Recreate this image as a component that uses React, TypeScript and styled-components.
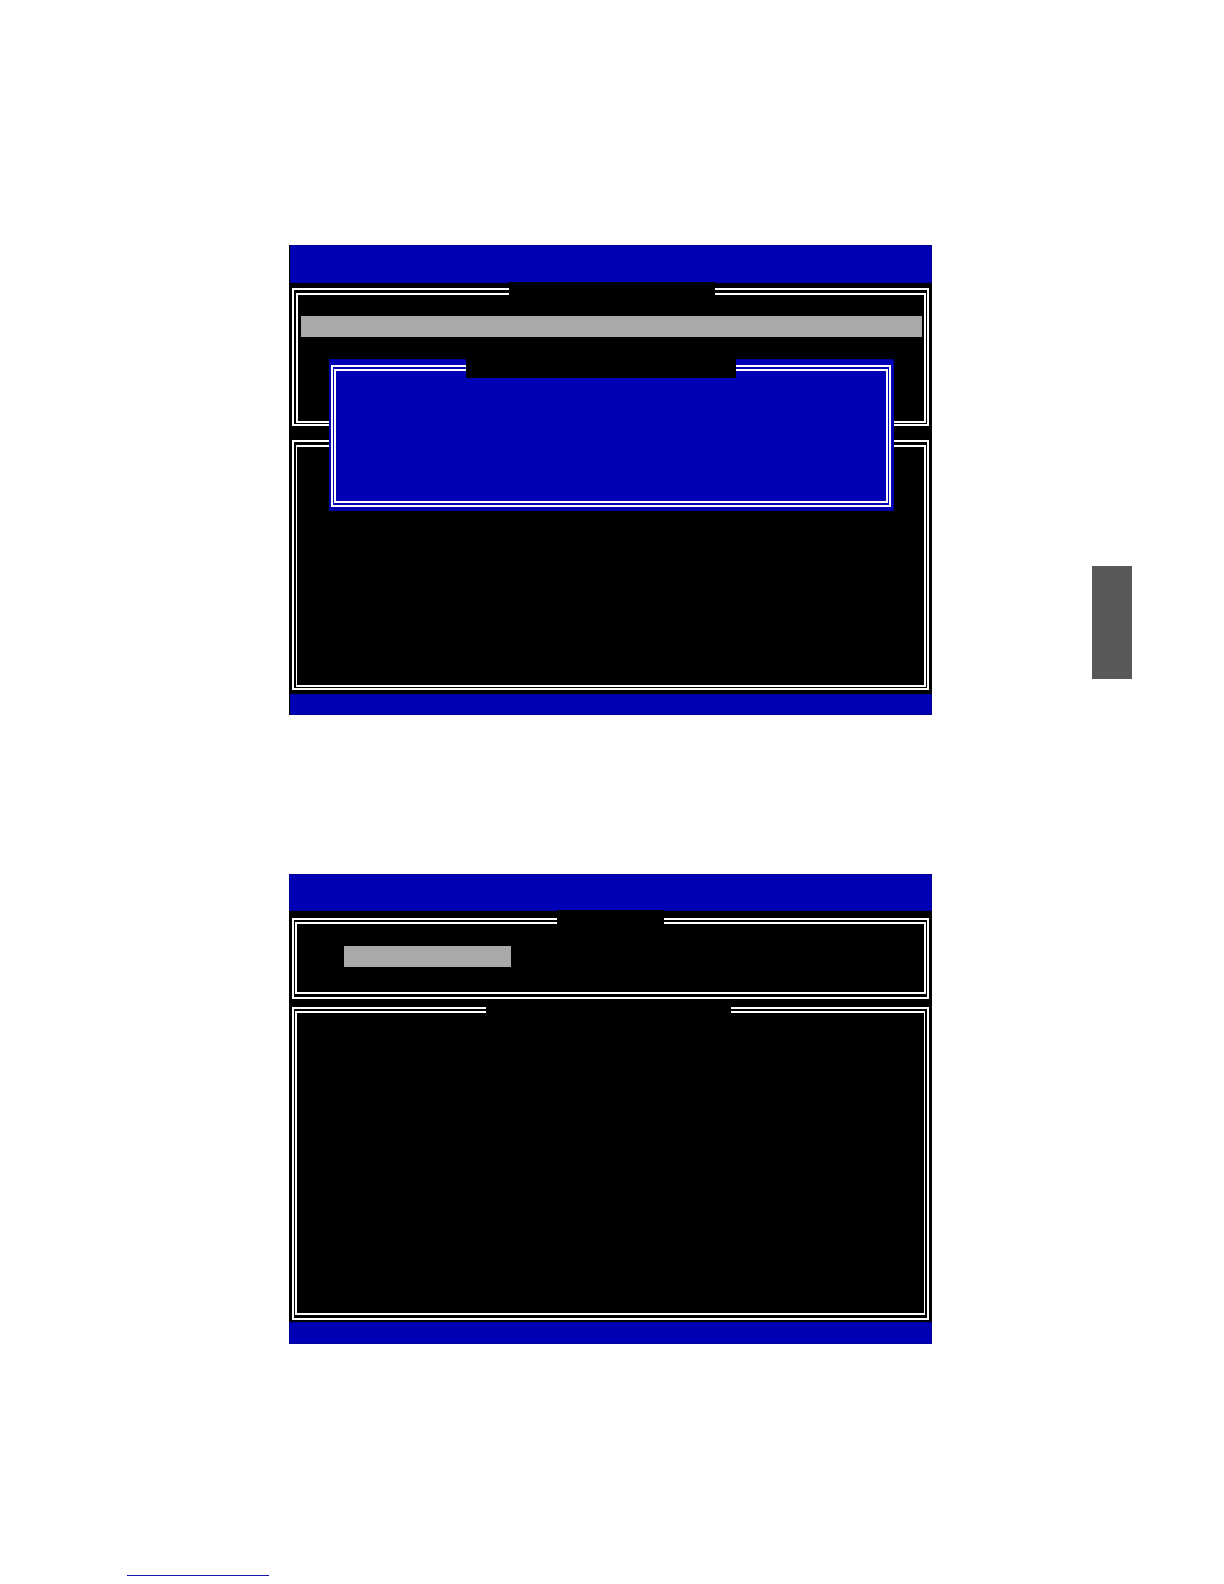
import React from 'react';
import styled, { createGlobalStyle } from 'styled-components';

const blue = '#0000b4';
const blueEdge = '#000098';

const GlobalStyle = createGlobalStyle`
  *, *::before, *::after { box-sizing: border-box; }
  body {
    margin: 0;
    background: #fff;
    font-family: "Liberation Sans", Arial, sans-serif;
  }
`;

const Page = styled.div`
  padding: 245px 0 8px;
`;

const Content = styled.div`
  display: grid;
  grid-template-columns: 1fr minmax(0, 643px) 1fr;
  align-items: start;
  padding-right: 3px;
`;

const Screens = styled.main`
  grid-column: 2;
  display: flex;
  flex-direction: column;
  gap: 159px;
`;

const ChapterTab = styled.aside`
  justify-self: end;
  width: 40px;
  height: 113px;
  margin: 321px 89px 0 0;
  background: #58595b;
`;

const Screen = styled.section`
  position: relative;
  display: flex;
  flex-direction: column;
  background: #000;
`;

const Bar = styled.div<{ $height: number; $inset?: number }>`
  height: ${(p) => p.$height}px;
  margin-left: ${(p) => p.$inset ?? 0}px;
  background: ${blue};
  box-shadow: inset 0 0 0 1px ${blueEdge};
`;

const Panels = styled.div<{ $gap: number; $padding: string }>`
  display: flex;
  flex-direction: column;
  gap: ${(p) => p.$gap}px;
  padding: ${(p) => p.$padding};
`;

const Frame = styled.div<{ $height: number; $padding: string }>`
  position: relative;
  display: flex;
  min-height: ${(p) => p.$height}px;
  padding: ${(p) => p.$padding};
  border: 2px solid #fff;
`;

const InnerFrame = styled.div<{ $left?: number; $right?: number }>`
  flex: 1;
  border: 2px solid #fff;
  border-left-width: ${(p) => p.$left ?? 2}px;
  border-right-width: ${(p) => p.$right ?? 2}px;
`;

const TitlePlate = styled.div<{ $left: number; $width: number; $top: number }>`
  position: absolute;
  top: ${(p) => p.$top}px;
  left: ${(p) => p.$left}px;
  width: ${(p) => p.$width}px;
  height: 19px;
  background: #000;
`;

const Highlight = styled.div<{ $margin: string; $width?: number }>`
  height: 21px;
  width: ${(p) => (p.$width ? `${p.$width}px` : 'auto')};
  margin: ${(p) => p.$margin};
  background: #a8a9ab;
`;

const Dialog = styled.div`
  position: absolute;
  top: 114px;
  left: 40px;
  right: 38px;
  padding: 6px 3px 4px 2px;
  background: ${blue};
  box-shadow: inset 0 0 0 1px ${blueEdge};
`;

const Rule = styled.hr`
  width: 142px;
  height: 1px;
  margin: 231px 0 0 127px;
  border: 0;
  background: #1414a8;
`;

export default function App() {
  return (
    <Page>
      <GlobalStyle />
      <Content>
        <Screens>
          <Screen>
            <Bar $height={38} $inset={1} />
            <Panels $gap={14} $padding="5px 3px 4px">
              <Frame $height={138} $padding="3px 1px 1px 2px">
                <InnerFrame>
                  <Highlight $margin="21px 2px 0 3px" />
                </InnerFrame>
                <TitlePlate $left={215} $width={206} $top={-8} />
              </Frame>
              <Frame $height={250} $padding="3px 1px 1px 2px">
                <InnerFrame $left={1} />
              </Frame>
            </Panels>
            <Bar $height={21} $inset={1} />
            <Dialog>
              <Frame $height={142} $padding="2px 1px">
                <InnerFrame />
              </Frame>
              <TitlePlate $left={137} $width={270} $top={0} />
            </Dialog>
          </Screen>
          <Screen>
            <Bar $height={37} />
            <Panels $gap={8} $padding="7px 3px 2px">
              <Frame $height={81} $padding="2px 1px 3px">
                <InnerFrame>
                  <Highlight $margin="22px 0 0 47px" $width={167} />
                </InnerFrame>
                <TitlePlate $left={263} $width={107} $top={-10} />
              </Frame>
              <Frame $height={313} $padding="2px 2px 3px 1px">
                <InnerFrame $right={1} />
                <TitlePlate $left={192} $width={245} $top={-6} />
              </Frame>
            </Panels>
            <Bar $height={22} />
          </Screen>
        </Screens>
        <ChapterTab />
      </Content>
      <Rule />
    </Page>
  );
}
